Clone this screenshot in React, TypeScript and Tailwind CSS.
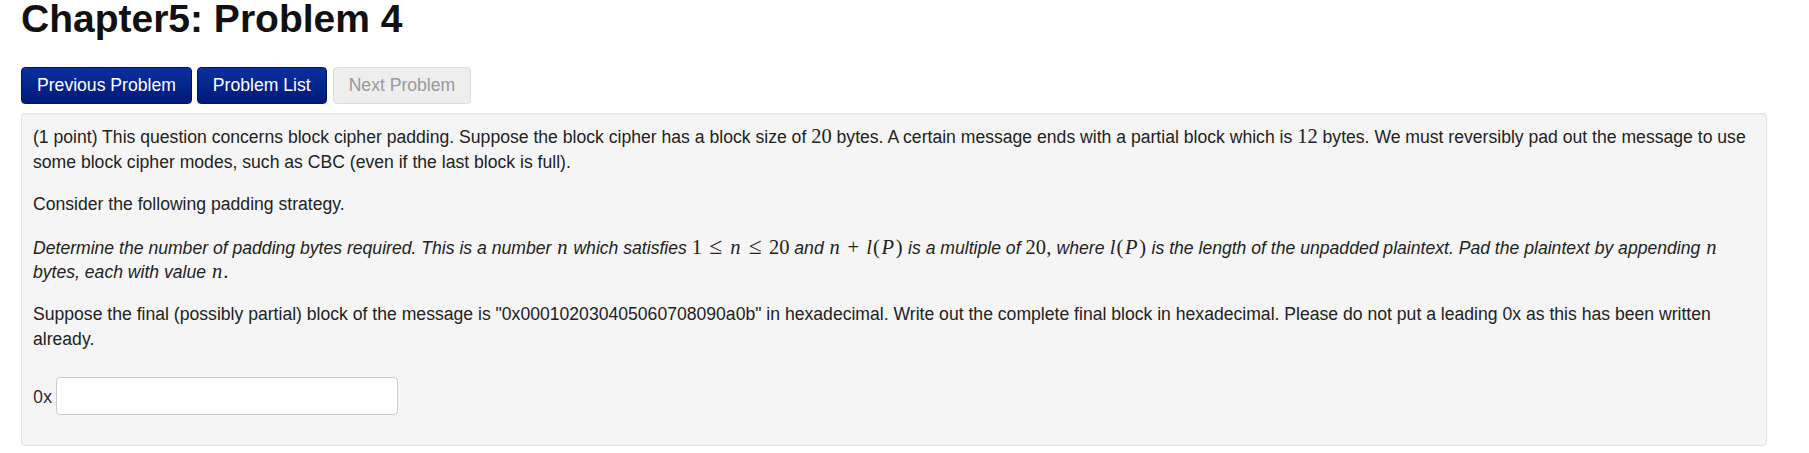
import React from 'react'

// Inline math, sized like MathJax output (Computer Modern widths)
const M = ({ children }: { children: React.ReactNode }) => (
  <span className="font-['Liberation_Serif',serif] text-[20.5px] not-italic leading-none whitespace-nowrap">{children}</span>
)
const G = ({ w, children }: { w: string; children: React.ReactNode }) => (
  <span className={`inline-block text-center ${w}`}>{children}</span>
)
const N = () => <G w="w-[0.6em] italic">n</G>
const L = () => <G w="w-[0.32em] italic">l</G>
const P = () => <G w="w-[0.72em] italic">P</G>
const Lp = () => <G w="w-[0.39em]">(</G>
const Rp = () => <G w="w-[0.39em]">)</G>
const Le = () => <G w="w-[0.68em] mx-[0.24em] text-[1.15em]">≤</G>
const Plus = () => <G w="w-[0.78em] mx-[0.222em]">+</G>

const navBtn =
  'flex h-[37px] items-center rounded-[4px] border px-[15px] text-[17.6px] leading-none'

export default function App() {
  return (
    <div className="min-h-screen bg-white pl-[21px] pr-[42px] font-['Liberation_Sans',Arial,sans-serif] text-[#222]">
      <h1 className="h-[38px] text-[39px] font-bold leading-[38px] text-[#111]">Chapter5: Problem 4</h1>

      <div className="mt-[29px] flex gap-[5px]">
        <button className={`${navBtn} border-[#00145e] bg-gradient-to-b from-[#0b2f9f] to-[#001a78] text-white`}>
          Previous Problem
        </button>
        <button className={`${navBtn} border-[#00145e] bg-gradient-to-b from-[#0b2f9f] to-[#001a78] text-white`}>
          Problem List
        </button>
        <button disabled className={`${navBtn} ml-[1px] border-[#dcdcdc] bg-[#eeeeee] text-[#999]`}>
          Next Problem
        </button>
      </div>

      {/* problem body */}
      <div className="mt-[9px] rounded-[4px] border border-[#e3e3e3] bg-[#f5f5f5] px-[11px] pt-[11px] pb-[11px] text-[17.6px] leading-[24.6px] shadow-[inset_0_1px_1px_rgba(0,0,0,0.03)]">
        <p>
          (1 point) This question concerns block cipher padding. Suppose the block cipher has a block size of{' '}
          <M>20</M> bytes. A certain message ends with a partial block which is <M>12</M> bytes. We must reversibly
          pad out the message to use some block cipher modes, such as CBC (even if the last block is full).
        </p>

        <p className="mt-[18px]">Consider the following padding strategy.</p>

        <p className="mt-[18px] italic">
          Determine the number of padding bytes required. This is a number{' '}
          <M>
            <N />
          </M>{' '}
          which satisfies{' '}
          <M>
            1<Le />
            <N />
            <Le />
            20
          </M>{' '}
          and{' '}
          <M>
            <N />
            <Plus />
            <L />
            <Lp />
            <P />
            <Rp />
          </M>{' '}
          is a multiple of{' '}
          <M>
            20<G w="w-[0.28em]">,</G>
          </M>{' '}
          where{' '}
          <M>
            <L />
            <Lp />
            <P />
            <Rp />
          </M>{' '}
          is the length of the unpadded plaintext. Pad the plaintext by appending{' '}
          <M>
            <N />
          </M>{' '}
          bytes, each with value{' '}
          <M>
            <N />
            <G w="w-[0.22em]">.</G>
          </M>
        </p>

        <p className="mt-[17px]">
          Suppose the final (possibly partial) block of the message is "0x000102030405060708090a0b" in hexadecimal.
          Write out the complete final block in hexadecimal. Please do not put a leading 0x as this has been written
          already.
        </p>

        <div className="mt-[26px] mb-[19px] flex items-center">
          <span className="font-['Open_Sans',sans-serif] text-[17.6px] text-[#222]">0x</span>
          <input
            type="text"
            className="ml-[4px] h-[38px] w-[342px] rounded-[4px] border border-[#cccccc] bg-white px-2 text-[17.6px] outline-none"
          />
        </div>
      </div>
    </div>
  )
}
